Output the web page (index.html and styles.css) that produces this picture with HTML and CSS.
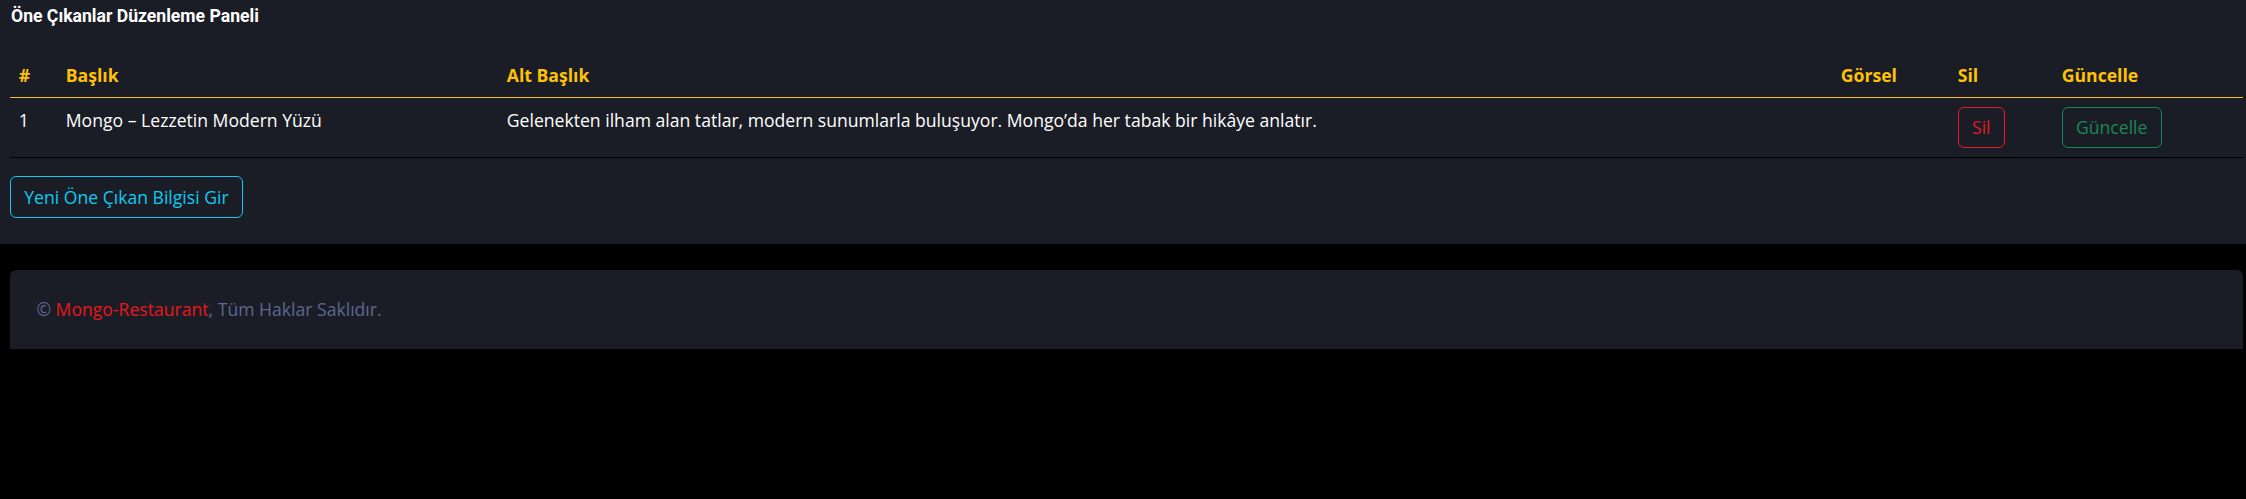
FILE: index.html
```html
<!DOCTYPE html>
<html lang="tr">
<head>
<meta charset="utf-8">
<title>Öne Çıkanlar Düzenleme Paneli</title>
<link rel="stylesheet" href="styles.css">
</head>
<body>
<main class="panel">
  <h5 class="panel-title">Öne Çıkanlar Düzenleme Paneli</h5>
  <table class="data-table">
    <colgroup>
      <col class="c-num"><col class="c-title"><col class="c-sub"><col class="c-img"><col class="c-del"><col class="c-upd">
    </colgroup>
    <thead>
      <tr>
        <th>#</th>
        <th>Başlık</th>
        <th>Alt Başlık</th>
        <th>Görsel</th>
        <th>Sil</th>
        <th>Güncelle</th>
      </tr>
    </thead>
    <tbody>
      <tr>
        <td>1</td>
        <td>Mongo – Lezzetin Modern Yüzü</td>
        <td>Gelenekten ilham alan tatlar, modern sunumlarla buluşuyor. Mongo’da her tabak bir hikâye anlatır.</td>
        <td></td>
        <td><a class="btn btn-danger" href="#">Sil</a></td>
        <td><a class="btn btn-success" href="#">Güncelle</a></td>
      </tr>
    </tbody>
  </table>
  <a class="btn btn-info" href="#">Yeni Öne Çıkan Bilgisi Gir</a>
</main>
<footer class="footer">
  <div class="footer-box">
    <span class="copy">©</span> <a class="brand" href="#">Mongo-Restaurant</a>, Tüm Haklar Saklıdır.
  </div>
</footer>
</body>
</html>
```
FILE: styles.css
```css
html, body {
  margin: 0;
  padding: 0;
}
body {
  background: #000;
  font-family: "Open Sans", "Liberation Sans", sans-serif;
  font-size: 17.6px;
  line-height: 26.4px;
  color: #fff;
}
.panel {
  background: #1b1d26;
  padding: 3px 3px 26px 10px;
}
.panel-title {
  margin: 0 0 24px 0;
  padding-left: 1px;
  font-family: Roboto, "Liberation Sans", sans-serif;
  font-weight: 700;
  font-size: 17.6px;
  line-height: 26px;
  color: #fff;
}
.data-table {
  width: 2233px;
  table-layout: fixed;
  border-collapse: collapse;
  margin-bottom: 18px;
}
.c-num { width: 47px; }
.c-title { width: 441px; }
.c-sub { width: 1334px; }
.c-img { width: 117px; }
.c-del { width: 104px; }
.c-upd { width: 190px; }
.data-table th,
.data-table td {
  padding: 8.8px;
  text-align: left;
  vertical-align: top;
}
.data-table th {
  color: #ffc107;
  font-weight: 700;
  border-bottom: 1px solid #ffc107;
}
.data-table td {
  color: #fff;
  font-weight: 400;
  border-bottom: 1px solid #000;
}
.btn {
  display: inline-block;
  padding: 6.6px 13.2px;
  border: 1px solid;
  border-radius: 6px;
  text-decoration: none;
  font-size: 17.6px;
  line-height: 26.4px;
  background: transparent;
}
.btn-danger {
  color: #e01b24;
  border-color: #e01b24;
}
.btn-success {
  color: #198754;
  border-color: #198754;
}
.btn-info {
  color: #0dcaf0;
  border-color: #0dcaf0;
}
.footer {
  padding: 26px 3px 0 10px;
}
.footer-box {
  background: #1b1d26;
  border-radius: 6px 6px 0 0;
  padding: 26.4px 26.4px 26.6px 26.4px;
  color: #5b6890;
}
.brand {
  color: #e8161b;
  text-decoration: none;
}
```
